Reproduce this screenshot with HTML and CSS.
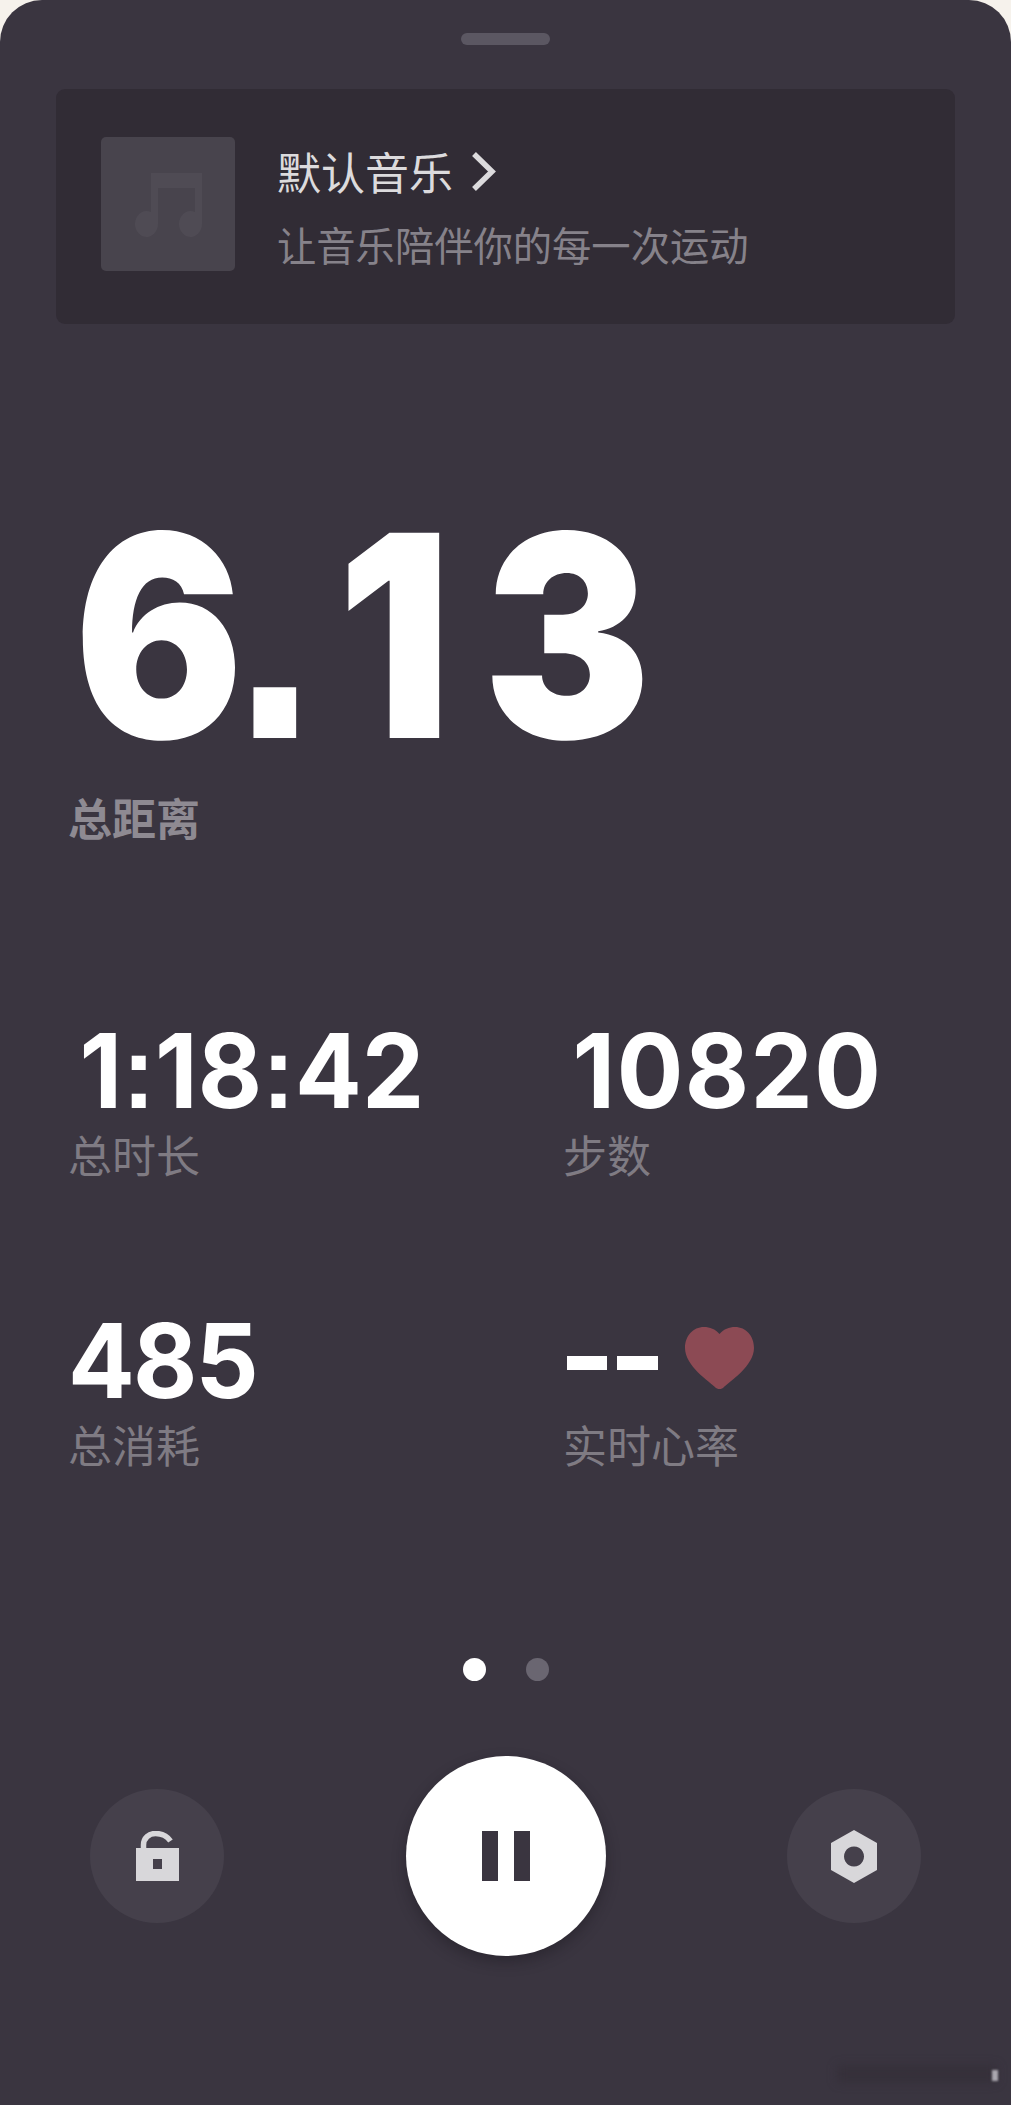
FILE: index.html
```html
<!DOCTYPE html>
<html lang="zh-CN">
<head>
<meta charset="utf-8">
<title>运动</title>
<link rel="stylesheet" href="styles.css">
</head>
<body>
<main class="sheet">
  <div class="handle"></div>
  <section class="music">
    <div class="thumb">
      <svg class="note" viewBox="0 0 67 65" width="67" height="65"><path d="M16 0h51v51a11.500 13 0 1 1-7-12V15H23v36a11.500 13 0 1 1-7-12z"/></svg>
    </div>
    <div class="music-text">
      <div class="music-title">默认音乐<svg class="chev" viewBox="0 0 25 39" width="25" height="39"><path d="M3 2l18 17.500L3 37"/></svg></div>
      <div class="music-sub">让音乐陪伴你的每一次运动</div>
    </div>
  </section>
  <section class="total">
    <div class="big">6<span class="pt">.</span><span class="one">1</span>3</div>
    <div class="big-label">总距离</div>
  </section>
  <section class="stats">
    <div class="stat">
      <div class="num num-indent">1<span class="cl">:</span>18<span class="cl">:</span>42</div>
      <div class="label">总时长</div>
    </div>
    <div class="stat">
      <div class="num num-indent2">10820</div>
      <div class="label">步数</div>
    </div>
    <div class="stat">
      <div class="num num-tight">485</div>
      <div class="label">总消耗</div>
    </div>
    <div class="stat">
      <div class="num-row"><span class="dash"></span><span class="dash"></span>
        <svg class="heart" viewBox="0 0 69 62" width="69" height="62"><path d="M34.500 7C39 2 44 0 50 0c11 0 19 9 19 21 0 18-24 33-31 40-2 1.500-5 1.500-7 0C24 54 0 39 0 21 0 9 8 0 19 0c6 0 11 2 15.500 7z"/></svg>
      </div>
      <div class="label">实时心率</div>
    </div>
  </section>
  <div class="dots"><span class="dot on"></span><span class="dot"></span></div>
  <section class="controls">
    <div class="round">
      <svg viewBox="0 0 43 50" width="43" height="50" class="ico"><path class="shackle" d="M7.500 18V14C7.500 7 13 2.500 19.500 2.500 26 2.500 31 5 34.500 10"/><path fill-rule="evenodd" d="M0 17h43v33H0zM17 28v10h9V28z"/></svg>
    </div>
    <div class="pause"><span class="bar"></span><span class="bar"></span></div>
    <div class="round">
      <svg viewBox="0 0 46 53" width="46" height="53" class="ico"><path fill-rule="evenodd" d="M23 0l23 13v27L23 53 0 40V13zM23 16.500a10 10 0 1 0 .01 0z"/></svg>
    </div>
  </section>
  <div class="smudge"></div>
  <div class="speck"></div>
</main>
</body>
</html>
```
FILE: styles.css
```css
* { box-sizing: border-box; }
html, body { margin: 0; padding: 0; background: #f6f2ec; }
body { width: 1011px; height: 2105px; overflow: hidden; font-family: "Noto Sans CJK SC", "Noto Sans", sans-serif; }
.sheet { position: relative; width: 1011px; height: 2105px; background: #3a3540; border-radius: 42px 42px 0 0; display: flex; flex-direction: column; overflow: hidden; }
.handle { width: 89px; height: 12px; border-radius: 6px; background: #5b5762; margin: 33px auto 0; flex: none; }
.music { margin: 44px 56px 0; height: 235px; flex: none; background: #312c35; border-radius: 9px; display: flex; align-items: flex-start; padding: 48px 45px; gap: 42px; }
.thumb { width: 134px; height: 134px; flex: none; background: #48444d; border-radius: 5px; display: flex; align-items: center; justify-content: center; }
.note { fill: #4f4b54; margin: 2px 0 0 0; }
.music-text { display: flex; flex-direction: column; }
.music-title { font-size: 44px; line-height: 44px; color: #dcdbdd; display: flex; align-items: center; margin-top: 12px; white-space: nowrap; }
.chev { fill: none; stroke: #dcdbdd; stroke-width: 5.500; margin-left: 18px; }
.music-sub { font-size: 39.300px; line-height: 44px; color: #86828a; margin-top: 29px; white-space: nowrap; }
.total { margin: 0 0 0 68px; flex: none; }
.big { font-family: Inter, sans-serif; font-weight: 900; font-size: 282px; line-height: 300px; height: 300px; color: #fff; margin-top: 162px; padding-left: 7px; white-space: nowrap; transform: scaleX(.89); transform-origin: 0 50%; }
.pt { font-family: "Liberation Sans", sans-serif; font-weight: 700; font-size: 340px; line-height: 0; margin: 0 23px 0 -12px; }
.one { letter-spacing: 36px; }
.big-label { font-size: 44px; line-height: 44px; font-weight: 700; color: #8e8a92; margin-top: 9px; }
.stats { margin: 189px 0 0 68px; display: grid; grid-template-columns: 495px 1fr; grid-auto-rows: 290px; flex: none; }
.num { font-family: Inter, sans-serif; font-weight: 700; font-size: 103px; line-height: 90px; height: 90px; margin-top: -2px; color: #fff; white-space: nowrap; transform: scaleX(.96); transform-origin: 0 50%; }
.cl { font-family: "Liberation Sans", sans-serif; line-height: 0; margin: 0; }
.num-indent { padding-left: 12px; }
.num-indent2 { padding-left: 10px; letter-spacing: 1.500px; }
.num-tight { letter-spacing: -2px; }
.num-row { height: 90px; display: flex; align-items: center; }
.label { font-size: 44px; line-height: 44px; color: #7f7b83; margin-top: 16px; }
.stat .num-row + .label { margin-top: 14px; }
.dash { width: 40px; height: 14px; background: #fff; margin: 0 10px 0 4px; flex: none; }
.dash + .dash { margin: 0; width: 41px; }
.heart { fill: #8c4a54; margin: -10px 0 0 27px; flex: none; }
.dots { display: flex; gap: 40px; justify-content: center; flex: none; margin-top: 50px; padding-left: 1px; }
.dot { width: 23px; height: 23px; border-radius: 50%; background: #6a6671; }
.dot.on { background: #fff; }
.controls { display: flex; justify-content: space-between; align-items: center; margin: 75px 90px 0; flex: none; }
.round { width: 134px; height: 134px; border-radius: 50%; background: #45404b; display: flex; align-items: center; justify-content: center; }
.ico { fill: #d8d7da; }
.shackle { fill: none; stroke: #d8d7da; stroke-width: 5.500; }
.pause { width: 200px; height: 200px; border-radius: 50%; background: #fff; box-shadow: 0 6px 14px rgba(20, 16, 24, .35); display: flex; align-items: center; justify-content: center; gap: 16px; }
.bar { width: 16px; height: 50px; background: #3a3540; }
.smudge { position: absolute; right: 14px; bottom: 22px; width: 160px; height: 18px; background: rgba(48, 43, 52, .45); filter: blur(5px); }
.speck { position: absolute; right: 13px; bottom: 24px; width: 6px; height: 11px; background: rgba(220, 218, 224, .7); filter: blur(1px); }
```
